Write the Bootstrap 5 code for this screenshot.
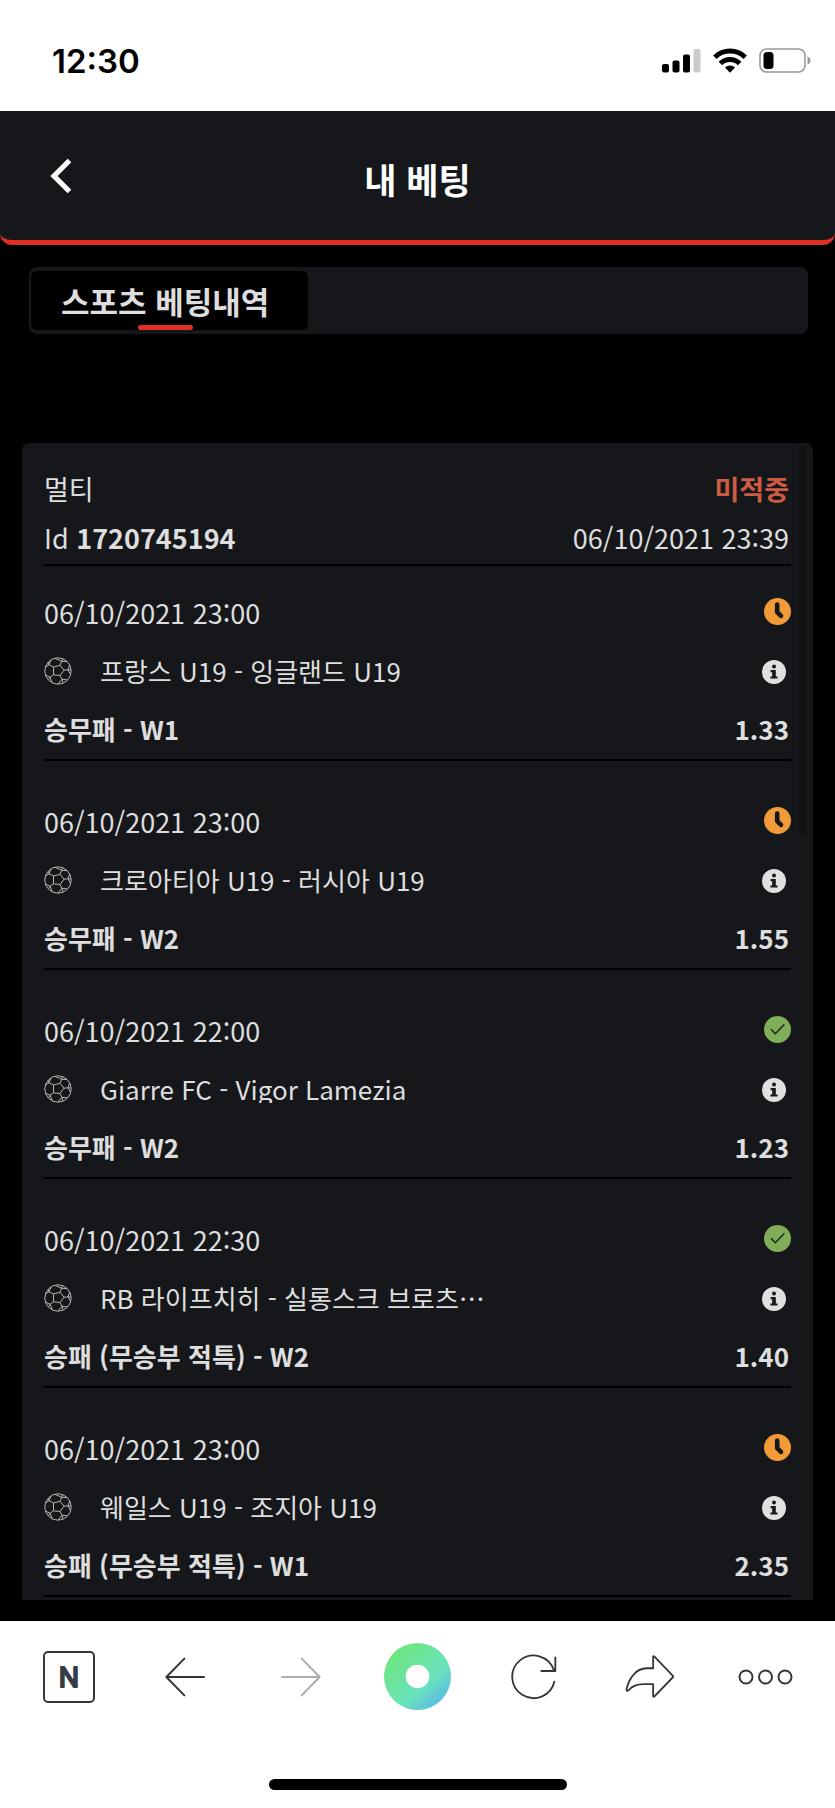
<!DOCTYPE html>
<html lang="ko">
<head>
<meta charset="utf-8">
<meta name="viewport" content="width=device-width, initial-scale=1">
<title>내 베팅</title>
<link href="https://cdn.jsdelivr.net/npm/bootstrap@5.3.0/dist/css/bootstrap.min.css" rel="stylesheet">
<style>
  :root { --panel: #16171b; --ink: #dedede; --accent: #e03024; }
  body {
    background: #000; color: var(--ink);
    font-family: "Noto Sans CJK KR", "Noto Sans", sans-serif;
    font-size: 27px; line-height: 40px;
  }
  svg { display: block; flex: none; }
  .status-bar { height: 111px; padding: 0 24px 6px 52px; background: #fff; color: #000; }
  .status-clock { font-family: "Inter", sans-serif; font-weight: 600; font-size: 33px; padding-top: 16px; }
  .status-icons { gap: 12px; padding-top: 16px; }
  .page-head {
    display: grid; grid-template-columns: 1fr auto 1fr; align-items: center;
    height: 134px; padding: 0 50px;
    background: var(--panel); border-bottom: 5px solid var(--accent);
    border-radius: 0 0 12px 12px;
  }
  .page-title { font-size: 35px; line-height: 48px; padding-top: 6px; color: #fff; }
  .tab-strip { margin: 22px 27px 0 29px; height: 67px; padding: 4px 2px; background: var(--panel); border-radius: 8px; }
  .tab-pill {
    height: 59px; padding: 5px 39px 0 30px; border: 0; border-radius: 6px;
    background: #000; color: var(--ink); font-size: 31px; line-height: 49px; font-weight: 700;
  }
  .tab-pill::after { content: ""; width: 55px; height: 5px; border-radius: 3px; background: var(--accent); }
  .slip-list { margin: 109px 22px 21px; padding: 26px 22px 0; background: var(--panel); border-radius: 8px 8px 0 0; min-height: 0; }
  .slip-thumb { top: 2px; right: 7px; width: 7px; height: 390px; border-radius: 4px; background: #101114; }
  .slip-head { gap: 9px; padding-bottom: 6px; border-bottom: 2px solid #000; }
  .slip-lost { color: #cd5c42; }
  .pad-end { padding-right: 2px; }
  .bet-item { padding: 41px 0 10px; border-bottom: 2px solid #000; }
  .bet-item:first-child { padding-top: 27px; }
  .state-icon { margin-bottom: 4px; }
  .match-row { gap: 28px; margin: 24px 0; height: 28px; font-size: 26px; }
  .match-name { line-height: 28px; }
  .pick-row { font-size: 26px; }
  .info-btn { margin: 2px 5px 0 0; }
  .tool-bar { padding: 21px 11px 0; height: 187px; background: #fff; color: #34363c; }
  .tool-row { height: 69px; }
  .tool-row button { color: inherit; }
  .tool-row button:disabled { color: #adadad; }
  .home-line { width: 298px; height: 11px; margin-top: 68px; border-radius: 6px; background: #000; }
</style>
</head>
<body class="vh-100 d-flex flex-column overflow-hidden">

<svg width="0" height="0" class="position-absolute" aria-hidden="true">
  <symbol id="ball" viewBox="0 0 28 28">
    <g fill="none" stroke="#b4b4b4" stroke-width="1" stroke-linejoin="round">
      <circle cx="14" cy="14" r="13.2"/>
      <path d="M9.5 10 16 8.3 20 13.2 16 18.5 9.5 17.8Z"/>
      <path d="M9.5 10 5 7.7M16 8.3 17.7 4.3M20 13.2 24 12.8M16 18.5 18 22.3M9.5 17.8 6 20.3"/>
      <path d="M1.6 10 5 7.7 7.2 2.7M5 7.7 4.4 5.2M11 1.3 17.7 4.3 23 4.6M17.7 4.3 18.6 1.8M25.6 8 24 12.8 26.6 17.6M24 12.8 27 13M23.2 22.8 18 22.3 14 27M18 22.3 19 26M1.6 18 6 20.3 8.4 25.7M6 20.3 4.4 22.8"/>
    </g>
  </symbol>
  <symbol id="clock" viewBox="0 0 27 27">
    <circle cx="13.5" cy="13.5" r="13.5" fill="#f09a38"/>
    <path d="M13.2 6.6V14.2L17 17.8" fill="none" stroke="#16171b" stroke-width="4.6" stroke-linecap="round" stroke-linejoin="round"/>
  </symbol>
  <symbol id="check" viewBox="0 0 27 27">
    <circle cx="13.5" cy="13.5" r="13.5" fill="#7fad58"/>
    <path d="M7.3 13.6 11.3 17.8 20 8.8" fill="none" stroke="#1d2318" stroke-width="1.4" stroke-linecap="round" stroke-linejoin="round"/>
  </symbol>
  <symbol id="info" viewBox="0 0 24 24">
    <circle cx="12" cy="12" r="12" fill="#e0e0e0"/>
    <g fill="#16171b"><circle cx="12" cy="6.6" r="2"/><path d="M8.6 10H13.8V16.4H15.6V18.6H8.4V16.4H10.2V12.2H8.6Z"/></g>
  </symbol>
</svg>

<div class="status-bar d-flex align-items-center justify-content-between flex-shrink-0">
  <span class="status-clock">12:30</span>
  <div class="status-icons d-flex align-items-center">
    <svg width="39" height="25" viewBox="0 0 39 25" aria-label="신호">
      <rect x="0" y="16" width="7" height="8.5" rx="2"/><rect x="10.5" y="12.500" width="7" height="12" rx="2"/>
      <rect x="21" y="6.500" width="7" height="18" rx="2"/><rect x="31.500" y="1" width="7" height="23.5" rx="2" fill="#cbcbcb"/>
    </svg>
    <svg width="34" height="25" viewBox="0 0 34 25" aria-label="와이파이">
      <g fill="none" stroke="#000" stroke-width="5"><path d="M1.800 9.200A22 22 0 0 1 32.200 9.200"/><path d="M7.400 15.400A13.600 13.600 0 0 1 26.600 15.400"/></g>
      <path d="M12 19.600A7.300 7.300 0 0 1 22 19.600L17 24.800Z"/>
    </svg>
    <svg width="52" height="25" viewBox="0 0 52 25" aria-label="배터리">
      <rect x="1" y="1" width="45" height="23" rx="6.500" fill="none" stroke="#999" stroke-width="1.600"/>
      <rect x="4.500" y="4" width="10" height="17" rx="3.500"/><path d="M48.500 8.500Q51.500 9.500 51.500 12.500T48.500 16.500Z" fill="#999"/>
    </svg>
  </div>
</div>

<header class="page-head flex-shrink-0">
  <a href="#" aria-label="뒤로" class="text-white">
    <svg width="22" height="36" viewBox="0 0 22 36"><path d="M19.500 2.500 4 18 19.500 33.500" fill="none" stroke="currentColor" stroke-width="5.200"/></svg>
  </a>
  <h1 class="page-title fw-bold mb-0">내 베팅</h1>
</header>

<nav class="tab-strip flex-shrink-0 d-flex">
  <button type="button" class="tab-pill d-flex flex-column align-items-center">스포츠 베팅내역</button>
</nav>

<main class="slip-list flex-grow-1 position-relative overflow-hidden">
  <div class="slip-thumb position-absolute"></div>
  <div class="slip-head d-flex flex-column">
    <div class="d-flex justify-content-between pad-end"><span>멀티</span><strong class="slip-lost">미적중</strong></div>
    <div class="d-flex justify-content-between pad-end"><span>Id <strong>1720745194</strong></span><span>06/10/2021 23:39</span></div>
  </div>

  <ul class="list-unstyled mb-0">
    <li class="bet-item">
      <div class="d-flex justify-content-between align-items-center"><span>06/10/2021 23:00</span><svg class="state-icon" width="27" height="27" aria-label="대기"><use href="#clock"/></svg></div>
      <div class="match-row d-flex align-items-center"><svg width="28" height="28"><use href="#ball"/></svg><span class="match-name flex-grow-1 text-truncate">프랑스 U19 - 잉글랜드 U19</span><button type="button" class="info-btn btn border-0 p-0" aria-label="정보"><svg width="24" height="24"><use href="#info"/></svg></button></div>
      <div class="pick-row d-flex justify-content-between fw-bold pad-end"><span>승무패 - W1</span><span>1.33</span></div>
    </li>
    <li class="bet-item">
      <div class="d-flex justify-content-between align-items-center"><span>06/10/2021 23:00</span><svg class="state-icon" width="27" height="27" aria-label="대기"><use href="#clock"/></svg></div>
      <div class="match-row d-flex align-items-center"><svg width="28" height="28"><use href="#ball"/></svg><span class="match-name flex-grow-1 text-truncate">크로아티아 U19 - 러시아 U19</span><button type="button" class="info-btn btn border-0 p-0" aria-label="정보"><svg width="24" height="24"><use href="#info"/></svg></button></div>
      <div class="pick-row d-flex justify-content-between fw-bold pad-end"><span>승무패 - W2</span><span>1.55</span></div>
    </li>
    <li class="bet-item">
      <div class="d-flex justify-content-between align-items-center"><span>06/10/2021 22:00</span><svg class="state-icon" width="27" height="27" aria-label="적중"><use href="#check"/></svg></div>
      <div class="match-row d-flex align-items-center"><svg width="28" height="28"><use href="#ball"/></svg><span class="match-name flex-grow-1 text-truncate">Giarre FC - Vigor Lamezia</span><button type="button" class="info-btn btn border-0 p-0" aria-label="정보"><svg width="24" height="24"><use href="#info"/></svg></button></div>
      <div class="pick-row d-flex justify-content-between fw-bold pad-end"><span>승무패 - W2</span><span>1.23</span></div>
    </li>
    <li class="bet-item">
      <div class="d-flex justify-content-between align-items-center"><span>06/10/2021 22:30</span><svg class="state-icon" width="27" height="27" aria-label="적중"><use href="#check"/></svg></div>
      <div class="match-row d-flex align-items-center"><svg width="28" height="28"><use href="#ball"/></svg><span class="match-name flex-grow-1 text-truncate">RB 라이프치히 - 실롱스크 브로츠…</span><button type="button" class="info-btn btn border-0 p-0" aria-label="정보"><svg width="24" height="24"><use href="#info"/></svg></button></div>
      <div class="pick-row d-flex justify-content-between fw-bold pad-end"><span>승패 (무승부 적특) - W2</span><span>1.40</span></div>
    </li>
    <li class="bet-item">
      <div class="d-flex justify-content-between align-items-center"><span>06/10/2021 23:00</span><svg class="state-icon" width="27" height="27" aria-label="대기"><use href="#clock"/></svg></div>
      <div class="match-row d-flex align-items-center"><svg width="28" height="28"><use href="#ball"/></svg><span class="match-name flex-grow-1 text-truncate">웨일스 U19 - 조지아 U19</span><button type="button" class="info-btn btn border-0 p-0" aria-label="정보"><svg width="24" height="24"><use href="#info"/></svg></button></div>
      <div class="pick-row d-flex justify-content-between fw-bold pad-end"><span>승패 (무승부 적특) - W1</span><span>2.35</span></div>
    </li>
  </ul>
</main>

<footer class="tool-bar flex-shrink-0">
  <div class="tool-row row g-0 flex-nowrap">
    <div class="col d-flex justify-content-center"><button type="button" class="btn border-0 p-0" aria-label="홈">
      <svg width="52" height="52" viewBox="0 0 52 52"><rect x="1" y="1" width="50" height="50" rx="4" fill="none" stroke="currentColor" stroke-width="2"/><text x="26" y="36" text-anchor="middle" font-family="Inter, sans-serif" font-weight="400" font-size="27" fill="#343c46" stroke="#343c46" stroke-width="2" stroke-linejoin="round">N</text></svg></button></div>
    <div class="col d-flex justify-content-center"><button type="button" class="btn border-0 p-0" aria-label="이전">
      <svg width="40" height="40" viewBox="0 0 120 120"><path d="M58 5 4 60 58 115M4 60H117" fill="none" stroke="currentColor" stroke-width="6" stroke-linecap="round" stroke-linejoin="round"/></svg></button></div>
    <div class="col d-flex justify-content-center"><button type="button" disabled class="btn border-0 p-0 opacity-100" aria-label="다음">
      <svg width="40" height="40" viewBox="0 0 120 120"><path d="M62 5 116 60 62 115M116 60H3" fill="none" stroke="currentColor" stroke-width="6" stroke-linecap="round" stroke-linejoin="round"/></svg></button></div>
    <div class="col d-flex justify-content-center"><button type="button" class="btn border-0 p-0" aria-label="그린닷">
      <svg width="67" height="67" viewBox="0 0 67 67"><defs><linearGradient id="dot" x1=".15" y1=".1" x2=".88" y2=".9"><stop offset="0" stop-color="#6ee67c"/><stop offset=".65" stop-color="#69e2bd"/><stop offset="1" stop-color="#5bb9e6"/></linearGradient></defs><circle cx="33.500" cy="33.500" r="33.500" fill="url(#dot)"/><circle cx="33.500" cy="33.500" r="11.800" fill="#fff"/></svg></button></div>
    <div class="col d-flex justify-content-center"><button type="button" class="btn border-0 p-0" aria-label="새로고침">
      <svg width="47" height="47" viewBox="0 0 141 141"><path d="M133 86A64 64 0 1 1 131 50M136 13V54H94" fill="none" stroke="currentColor" stroke-width="5.500" stroke-linecap="round" stroke-linejoin="round"/></svg></button></div>
    <div class="col d-flex justify-content-center"><button type="button" class="btn border-0 p-0" aria-label="공유">
      <svg width="51" height="45" viewBox="0 0 152 136"><path d="M87 9Q87 4 91 8L146 65Q149 68 146 71L91 128Q87 131 87 126V91H60C36 91 22 98 14 109Q5 115 7 105C16 66 40 44 66 43H87Z" fill="none" stroke="currentColor" stroke-width="5.500" stroke-linejoin="round"/></svg></button></div>
    <div class="col d-flex justify-content-center"><button type="button" class="btn border-0 p-0" aria-label="더보기">
      <svg width="55" height="16" viewBox="0 0 55 16"><g fill="none" stroke="currentColor" stroke-width="2"><circle cx="8" cy="8" r="6.500"/><circle cx="27.500" cy="8" r="6.500"/><circle cx="47" cy="8" r="6.500"/></g></svg></button></div>
  </div>
  <div class="home-line mx-auto"></div>
</footer>

<script src="https://cdn.jsdelivr.net/npm/bootstrap@5.3.0/dist/js/bootstrap.bundle.min.js"></script>
</body>
</html>
